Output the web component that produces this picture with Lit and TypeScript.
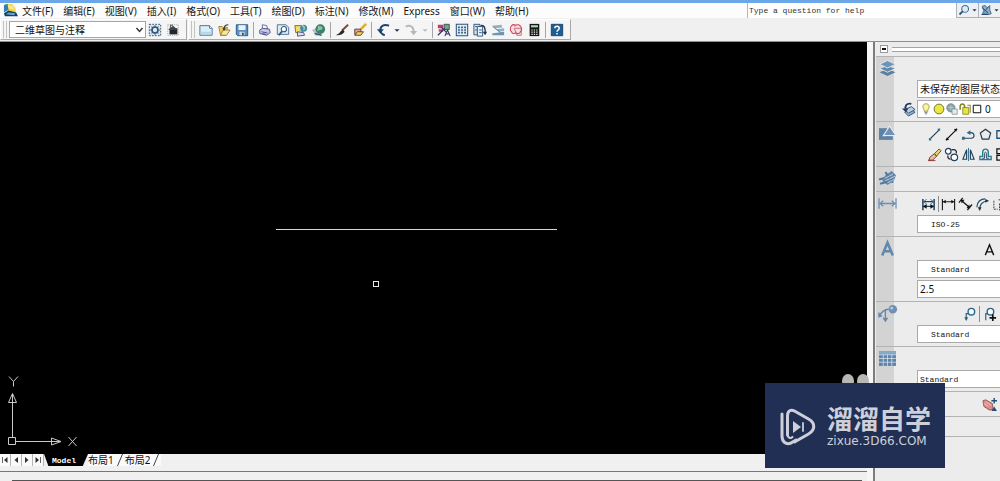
import { LitElement, html, svg, css, nothing, type TemplateResult } from "lit";
import { customElement, property } from "lit/decorators.js";

const glyphs: Record<string, unknown> = {
  logo: svg`<path d="M2 1h8l3 4 1 5H4z" fill="#f3d447"/><path d="M1 2l4-1 1 6-5 3z" fill="#2f7fb8"/><path d="M5 2l6 1 1 4-6-1z" fill="#f9e88c"/><path d="M1 11l5-3 8 2 2 4H2z" fill="#163f63"/><path d="M3 12l3-2 7 1-1 2z" fill="#5fa6d0"/>`,
  gear: svg`<path d="M1.500 1.500h13v13h-13z" fill="#dce8f1" stroke="#2c4155" stroke-dasharray="2 1.4"/><circle cx="8" cy="8" r="3.400" fill="none" stroke="#31567a" stroke-width="1.800"/><path d="M8 2.500v3M8 10.500v3M2.500 8h3M10.500 8h3M4 4l2 2M10 10l2 2M12 4l-2 2M6 10l-2 2" stroke="#31567a" stroke-width="1.200"/>`,
  workspace: svg`<path d="M2 2h12v12H2z" fill="none" stroke="#8a8a8a" stroke-dasharray="1 1.5"/><path d="M4 6h9v7H4z" fill="#20262d"/><path d="M2.500 8L8 3l5.500 5" fill="#3c4650"/><path d="M5 6V2.500h3" stroke="#333" fill="none"/>`,
  fresh: svg`<path d="M1 3h11l3 3v8H1z" fill="#d9eef8" stroke="#3f6c8d"/><path d="M12 3v3h3" fill="#fff" stroke="#3f6c8d"/><path d="M2 10h12v3H2z" fill="#b4d8ec"/>`,
  open: svg`<path d="M2 4h4l1 1h5l-2 9H4z" fill="#f0cf62" stroke="#85621c" stroke-width=".8"/><path d="M4 14l3-6h8l-4 6z" fill="#f8e79a" stroke="#85621c" stroke-width=".8"/><path d="M13 2c-3 0-5 1-5 5" stroke="#333" stroke-width="1.300" fill="none"/><path d="M6 6h4l-2 3z" fill="#333"/>`,
  save: svg`<path d="M1.500 2h13v12.500H3l-1.500-1.500z" fill="#5b8fbe" stroke="#25527c"/><path d="M4 2.500h8v5.500H4z" fill="#eaf3fa"/><path d="M5 10h6v4H5z" fill="#c9dcea"/><path d="M8 11h2v3H8z" fill="#25527c"/>`,
  print: svg`<path d="M5 2l5 1 1 4H5z" fill="#f6f8ff" stroke="#5a5f8d"/><path d="M2 8l3-2 8 1 1 4-4 3-8-2z" fill="#c5c8ea" stroke="#444a80"/><path d="M4 10l7 1.500M5 12l4 1" stroke="#444a80"/>`,
  preview: svg`<path d="M1.500 2h10l3 3v8h-13z" fill="#dcecf6" stroke="#41698c"/><circle cx="9" cy="7" r="3" fill="#fff" stroke="#2c587f" stroke-width="1.200"/><path d="M7 9.500L3 14" stroke="#2c587f" stroke-width="2"/>`,
  publish: svg`<path d="M1 3h8l2 3-2 5H2z" fill="#f2de64" stroke="#6b6427"/><circle cx="11" cy="6" r="4" fill="#3e88bd"/><path d="M9 3c2 0 4 2 2 5" stroke="#bfe08b" stroke-width="1.500" fill="none"/><path d="M4 10l7 1 1 3-8 1z" fill="#d7dcf0" stroke="#434b78"/>`,
  globe: svg`<path d="M0 8l8-4 3 8-6 3z" fill="#b5c4cf"/><circle cx="9.500" cy="7" r="5.500" fill="#3a8266"/><path d="M7 3c3 1 5 0 5 3s-5 1-6 4" fill="#8cc2a6"/><path d="M3 12l8 2" stroke="#355a78" stroke-width="2"/>`,
  brush: svg`<path d="M15 2L8 8.500" stroke="#7b4a36" stroke-width="2.200"/><path d="M9 7.500L6 10c-1 2-3 3-5 4 4 .5 8-1 10-4z" fill="#2b2626"/>`,
  block: svg`<path d="M15 1L9 7" stroke="#ddb02e" stroke-width="3"/><path d="M2 7h7v6H2z" fill="#e0a79c" stroke="#53372f"/><path d="M2 14l3-4h7l-3 4z" fill="#f4d45e" stroke="#53372f"/>`,
  undo: svg`<path d="M15 3C9 1 5 3 5 8c0 3 2 5 5 6" fill="none" stroke="#1d4370" stroke-width="2.200"/><path d="M1 7h8l-4 5z" fill="#1d4370"/>`,
  redo: svg`<path d="M2 4c5-2 9 0 9 6" fill="none" stroke="#b5b9bd" stroke-width="2.200"/><path d="M7 9h8l-4 5z" fill="#b5b9bd"/>`,
  props: svg`<path d="M1 2h6v4H1zM2 7h5v3H2z" fill="#b9406b"/><path d="M8 1.500h6v6H8z" fill="#68b06b" stroke="#3a3d66"/><path d="M1 14l8-8M5 5l6 6" stroke="#3c3167" stroke-width="1.400"/><path d="M9 15l3-7 3 7M10 12.500h4" fill="none" stroke="#3a3d66" stroke-width="1.300"/>`,
  center: svg`<path d="M1.500 1.500h13v13h-13z" fill="#e0edf6" stroke="#2f557c" stroke-width="1.200"/><path d="M3.500 5h2M7 5h2M10.500 5h2M3.500 8h2M7 8h2M10.500 8h2M3.500 11h2M7 11h2M10.500 11h2" stroke="#2f557c" stroke-width="1.800"/>`,
  palettes: svg`<path d="M1 1.500h7v12H1z" fill="#cfe0f0" stroke="#274b75"/><path d="M5 4h6v11H5z" fill="#e9f2fa" stroke="#274b75"/><path d="M2.500 4h2M2.500 8h2M7 8h3M7 11h3" stroke="#274b75"/><path d="M9 3c4-1 5 3 5 8" stroke="#1f3554" stroke-width="1.600" fill="none"/><path d="M11 10h5l-2 4z" fill="#1f3554"/>`,
  sheets: svg`<path d="M1 3l11-1 1 3-8 1zM6 7l9-1v3l-6 1z" fill="#8fb2ca"/><path d="M1 12l14-2v4H2z" fill="#6c95b3"/><path d="M2 4l9 7" stroke="#5b7080"/>`,
  markup: svg`<path d="M3 3c2-2 4-1 4 0 2-2 6-1 6 1 2 1 2 5 0 6 0 2-4 3-5 1-2 2-5 1-5-1-2-1-2-5 0-7z" fill="#f8dcdf" stroke="#c5495b" stroke-width="1.200"/><path d="M6 6h8v8H9z" fill="none" stroke="#bc6470"/>`,
  calc: svg`<path d="M3 1h11v14H3z" fill="#171717"/><path d="M4.500 2.500h8V5h-8z" fill="#a9d6a5"/><path d="M5 8h1.500M7.750 8h1.500M10.500 8H12M5 10.500h1.500M7.750 10.500h1.500M10.500 10.500H12M5 13h1.500M7.750 13h1.500M10.500 13H12" stroke="#eee" stroke-width="1.300"/>`,
  help: svg`<path d="M1.500 1.500h13v13h-13z" fill="#1f5e92" stroke="#113d64"/><path d="M5.500 6c0-3 5-3 5 0 0 2-2.500 1.500-2.500 4M8 11.500v1.500" fill="none" stroke="#fff" stroke-width="1.700"/>`,
  search: svg`<circle cx="9.500" cy="6.500" r="4.500" fill="#d9ecf7" stroke="#426b8d" stroke-width="1.400"/><path d="M6.500 9.500L2 14" stroke="#33506b" stroke-width="2.400"/>`,
  comms: svg`<path d="M3 3l4-1 3 3 3-3v6l2 5-4 1-3-2-5 2 2-5z" fill="#8fb0cd" stroke="#2c4e75"/><path d="M3 5l8 7M11 4l-5 6M2 14h9" stroke="#24466d" stroke-width="1.300"/>`,
  drop: svg`<path d="M5 7h6l-3 3z" fill="#27384e"/>`,
  dropOff: svg`<path d="M5 7h6l-3 3z" fill="#b9bcc0"/>`,
  layers: svg`<path d="M8 8.500l7.500 3L8 15 .5 11.500z" fill="#5c7e9f"/><path d="M8 5l7.500 3L8 11.500.5 8z" fill="#6288ac" stroke="#ececec" stroke-width=".8"/><path d="M8 .5L15.500 4 8 7.500.5 4z" fill="#6d94b9" stroke="#ececec" stroke-width=".8"/>`,
  shapes: svg`<path d="M0 3h8v11H0z" fill="#5d82a6"/><path d="M10 1l6 9H4z" fill="#6f93b6" stroke="#ececec"/><path d="M7 10.500h6V14H7z" fill="#5d82a6"/>`,
  hatchNav: svg`<path d="M6 5l6-4 4 4-2 5-6 4-5-4z" fill="#6287aa"/><path d="M0 9l7-2M1 13l7-2M6 2l7 10" stroke="#54789b" stroke-width="2"/><path d="M5 8l8-4M6 10l9-4M8 12l6-3" stroke="#dfe5eb" stroke-width=".7"/>`,
  dimNav: svg`<path d="M0 3v10M16 3v10M1 8h14M4 5.500L1 8l3 2.500M12 5.500L15 8l-3 2.500" fill="none" stroke="#6b90b4" stroke-width="1.200"/>`,
  textNav: svg`<path d="M3 14.500L8 2.500l5 12M4.500 10.500h7" fill="none" stroke="#6188ad" stroke-width="2.400"/>`,
  leaderNav: svg`<circle cx="13" cy="4" r="4" fill="#6e91b3"/><circle cx="12" cy="3" r="1.300" fill="#b5cadc"/><path d="M9 4C4 4 2 7 0 11M0 7v4l3-1M6 5v10M4 12l2 3 2-3" fill="none" stroke="#6287aa" stroke-width="1.300"/>`,
  tableNav: svg`<path d="M0 1h16v14H0z" fill="#5f85aa"/><path d="M0 1h16v3H0z" fill="#87a9c8"/><path d="M0 4.500h16M0 8h16M0 11.500h16M4 4v11M8 4v11M12 4v11" stroke="#dce6ef" stroke-width=".7"/>`,
  layerPrev: svg`<path d="M4 11l7-3 4 3-7 4z" fill="#93b0cb" stroke="#35557a"/><path d="M4 8l7-3 4 3-7 4z" fill="#bcd0e1" stroke="#35557a"/><path d="M11 2C6 1 4 4 5 8" fill="none" stroke="#213c62" stroke-width="2"/><path d="M1 7h7l-3 4z" fill="#213c62"/>`,
  bulb: svg`<path d="M8 1c-5 0-5 5-2.500 8v2h5V9C13 6 13 1 8 1z" fill="#fbf3a0" stroke="#8b8440"/><path d="M6 12.500h4M6.500 14.500h3" stroke="#555"/>`,
  sun: svg`<circle cx="8" cy="8" r="6.500" fill="#ece843" stroke="#757426" stroke-width="1.300"/>`,
  freeze: svg`<circle cx="6.500" cy="6.500" r="5.500" fill="#8ca7a8" stroke="#627c80"/><path d="M8 8h7v7H8z" fill="#e3eaea" stroke="#7f9294"/><path d="M3 6h7M6.500 3v7" stroke="#c1d1d2"/>`,
  lock: svg`<path d="M1.500 9V5c0-5 6-5 6 0v2" fill="none" stroke="#7e8223" stroke-width="2"/><path d="M5 6h8v9H5z" fill="#eae442" stroke="#77781e"/><path d="M11 3h4v10" fill="none" stroke="#888a32" stroke-width="1.400"/>`,
  swatch: svg`<path d="M2 2h12v12H2z" fill="#fff" stroke="#111" stroke-width="1.600"/>`,
  line: svg`<path d="M3 13L13 3" stroke="#243c55" stroke-width="1.300"/><path d="M2 12h2.500v2.500H2zM11.500 1.500H14V4h-2.500z" fill="#2e7390"/>`,
  xline: svg`<path d="M2 14L14 2" stroke="#111" stroke-width="1.400"/><path d="M2 14.500l1-3.500 2.500 2.500zM14 1.500l-1 3.500-2.500-2.500z" fill="#111"/>`,
  pline: svg`<path d="M2 12h9c4 0 4-6-1-6H8" fill="none" stroke="#1f4662" stroke-width="1.300"/><path d="M1 10.500h3v3H1zM10 3.500v5L6 6z" fill="#2e6a89"/>`,
  polygon: svg`<path d="M8 2.500l5.500 4-2 6.500h-7l-2-6.500z" fill="none" stroke="#243c4d" stroke-width="1.300"/>`,
  rect: svg`<path d="M2 4h12v8H2z" fill="none" stroke="#245070" stroke-width="1.400"/>`,
  erase: svg`<path d="M8 7l5-5 2 2-5 6z" fill="#e9d26c" stroke="#5d5225"/><path d="M3 11l5-4 2 3-4 4H2z" fill="#e8c6a2" stroke="#6b3431"/><path d="M1 14.500h8" stroke="#8a3b30"/>`,
  copy: svg`<circle cx="4.500" cy="4.500" r="3" fill="#fff" stroke="#20425f" stroke-width="1.300"/><circle cx="11" cy="11" r="3.500" fill="#fff" stroke="#20425f" stroke-width="1.300"/><path d="M8 3c4-1 6 1 5 4M4 9c0 2 1 4 3 4" fill="none" stroke="#222" stroke-width="1.300"/>`,
  mirror: svg`<path d="M6 3v10H2zM10 3v10h4z" fill="none" stroke="#223f58" stroke-width="1.200"/><path d="M8 1v14" stroke="#2c6e8d"/>`,
  offset: svg`<path d="M2 13.500V10h3V6c0-5 6-5 6 0v4h3v3.500z" fill="none" stroke="#287a8e" stroke-width="1.500"/><path d="M4 12h3V7c0-2 2-2 2 0v5h3" fill="none" stroke="#264a68"/>`,
  array: svg`<path d="M2 2h5v5H2zM9 2h5v5H9zM2 9h5v5H2zM9 9h5v5H9z" fill="none" stroke="#111" stroke-width="1.300"/>`,
  dimFast: svg`<path d="M2 2v12M14 2v12" stroke="#26445f" stroke-width="1.600"/><path d="M2 5h12M2 10h12" stroke="#26445f" stroke-width="1.300"/><path d="M6 2.500L2.500 5 6 7.500M10 2.500L13.500 5 10 7.500" fill="none" stroke="#3e7192"/><path d="M6 7.500L2 10l4 2.500zM10 7.500l4 2.500-4 2.500z" fill="#111"/>`,
  dimLinear: svg`<path d="M1.500 2v12M14.500 2v12M2 5h12" stroke="#1b1b1b" stroke-width="1.200"/><path d="M5 3L2 5l3 2zM11 3l3 2-3 2z" fill="#111"/>`,
  dimAligned: svg`<path d="M4 4l8 7M1 6l4-5M10 14l5-6" stroke="#111" stroke-width="1.300"/><path d="M3 3h4L4 7zM13 12H9l3-4z" fill="#111"/>`,
  dimArc: svg`<path d="M5 13C5 8 8 5 13 4M2 11c0-6 4-9 9-9" fill="none" stroke="#244b67" stroke-width="1.300"/><path d="M3 11h4l-2 4zM15 4l-4-2v4z" fill="#23313f"/>`,
  dimOrd: svg`<path d="M2 4v9h4M7 3h5M8 7v7h5" fill="none" stroke="#333" stroke-dasharray="2 1"/>`,
  mtext: svg`<path d="M3.500 14L8 3l4.500 11M5 10.500h6" fill="none" stroke="#111" stroke-width="1.500"/>`,
  leader: svg`<circle cx="10" cy="5" r="3.500" fill="#f5fafc" stroke="#2f658a" stroke-width="1.500"/><path d="M7 7H4.500v6" fill="none" stroke="#2f658a" stroke-width="1.300"/><path d="M2.500 11h4l-2 4z" fill="#315b78"/>`,
  leaderAdd: svg`<circle cx="9" cy="5" r="3.500" fill="#f5fafc" stroke="#2f658a" stroke-width="1.500"/><path d="M6 7H4v7" fill="none" stroke="#2f658a" stroke-width="1.300"/><path d="M11.500 8v7M8 11.500h7" stroke="#111" stroke-width="1.800"/>`,
  hand: svg`<path d="M1 4l3-1 7 4 1 6-4 1-6-4z" fill="#dc8b86" stroke="#985955"/><path d="M2 7l5 3M4 5l6 4" stroke="#f3c2bd"/><path d="M13 1v6M10 4h6" stroke="#26507b" stroke-width="1.500"/><path d="M10 15l3-5 3 5z" fill="#26507b"/>`,
  first: svg`<path d="M3 2v12" stroke="#333" stroke-width="1.500"/><path d="M13 2v12L6 8z" fill="#333"/>`,
  prev: svg`<path d="M12 2v12L5 8z" fill="#333"/>`,
  next: svg`<path d="M4 2v12l7-6z" fill="#333"/>`,
  last: svg`<path d="M13 2v12" stroke="#333" stroke-width="1.500"/><path d="M3 2v12l7-6z" fill="#333"/>`,
};

const icon = (name: string) =>
  html`<svg class="icon" viewBox="0 0 16 16" aria-hidden="true">${glyphs[name]}</svg>`;

const iconStyles = css`
  * { box-sizing: border-box; }
  .icon { width: 14px; height: 14px; display: block; flex: none; overflow: visible; }
  button { border: 0; padding: 0; margin: 0; background: none; font: inherit; color: inherit;
    display: flex; align-items: center; justify-content: center; flex: none; }
  select, input { font: inherit; color: inherit; margin: 0; border: 0; border-radius: 0; outline: 0;
    background: #fff; appearance: none; min-width: 0; }
`;

@customElement("menu-bar")
class MenuBar extends LitElement {
  static styles = [iconStyles, css`
    :host { display: flex; height: 15px; background: #fcfcfc; align-items: center; padding-left: 3px; }
    .logo .icon { width: 15px; height: 15px; }
    nav { display: flex; gap: 10px; padding-left: 4px; flex: 1; }
    nav button { color: #161616; }
    .ask { display: flex; width: 253px; height: 15px; border-left: 1px solid #b5b5b5; }
    .ask input { flex: 1; font: 8px "Liberation Mono", monospace; color: #333; padding: 0 0 0 1px; }
    .ask button { border: 1px solid #aab3bd; border-width: 0 0 1px 0; background: #eef1f4; }
    .ask .wide { width: 14px; border-left-width: 1px; }
    .ask .thin { width: 8px; }
    .wide .icon { width: 12px; height: 12px; }
    .thin .icon { width: 11px; }
  `];
  render() {
    const items = ["文件(F)", "编辑(E)", "视图(V)", "插入(I)", "格式(O)", "工具(T)", "绘图(D)", "标注(N)", "修改(M)", "Express", "窗口(W)", "帮助(H)"];
    return html`
      <span class="logo">${icon("logo")}</span>
      <nav>${items.map((t) => html`<button>${t}</button>`)}</nav>
      <div class="ask">
        <input aria-label="Help question" value="Type a question for help">
        <button class="wide" aria-label="Search">${icon("search")}</button>
        <button class="thin" aria-label="Search options">${icon("drop")}</button>
        <button class="wide" aria-label="Communication center">${icon("comms")}</button>
        <button class="thin" aria-label="More">${icon("drop")}</button>
      </div>`;
  }
}

@customElement("tool-bar")
class ToolBar extends LitElement {
  static styles = [iconStyles, css`
    :host { box-sizing: border-box; display: flex; gap: 1px; height: 24px; padding-top: 1px; background: #f0f0f0; border-bottom: 1px solid #8f8f8f; }
    .group { display: flex; align-items: center; height: 21px; padding-right: 4px; border: 1px solid #fff; border-right-color: #a9a9a9; border-bottom-color: #a9a9a9; background: #f5f5f5; }
    .grip { width: 4px; height: 17px; margin: 0 2px; border: 1px solid #c2c2c2; border-width: 0 1px; flex: none; }
    .combo { position: relative; display: flex; width: 137px; height: 17px; border: 1px solid #a5a5a5; background: #fff; }
    .combo select { flex: 1; padding: 0 16px 0 5px; background: none; }
    .combo svg { position: absolute; right: 1px; top: 4px; width: 9px; height: 8px; pointer-events: none; }
    button { width: 18px; height: 18px; }
    button.arrow { width: 10px; }
    .sep { width: 1px; height: 16px; margin: 0 2px; background: #a5a5a5; flex: none; }
  `];
  render() {
    const tools = ["fresh", "open", "save", "|", "print", "preview", "publish", "globe", "|", "brush", "block", "|", "undo", "drop", "redo", "dropOff", "|", "props", "center", "palettes", "sheets", "markup", "calc", "|", "help"];
    return html`
      <div class="group">
        <span class="grip"></span>
        <div class="combo">
          <select aria-label="Workspace"><option>二维草图与注释</option></select>
          <svg viewBox="0 0 9 8"><path d="M1.500 2l3 3.500 3-3.500" fill="none" stroke="#333" stroke-width="1.400"/></svg>
        </div>
        <button aria-label="Workspace settings">${icon("gear")}</button>
        <button aria-label="My workspace">${icon("workspace")}</button>
      </div>
      <div class="group">
        <span class="grip"></span>
        ${tools.map((t) => t === "|" ? html`<span class="sep"></span>`
          : html`<button class=${t.startsWith("drop") ? "arrow" : ""} aria-label=${t}>${icon(t)}</button>`)}
      </div>`;
  }
}

@customElement("drawing-area")
class DrawingArea extends LitElement {
  static styles = css`
    :host { display: block; position: relative; background: #000; overflow: hidden; }
    svg { position: absolute; left: 0; }
    .model { top: 0; width: 600px; height: 300px; }
    .ucs { bottom: 0; width: 90px; height: 84px; }
  `;
  render() {
    return html`
      <svg class="model" viewBox="0 0 600 300" fill="none">
        <path d="M276 187.500h281" stroke="#d8d8d8"/>
        <rect x="373.500" y="239.500" width="5" height="5" stroke="#e6e6e6"/>
      </svg>
      <svg class="ucs" viewBox="0 0 90 84" fill="none" stroke="#c9c9c9">
        <path d="M8.500 67.500h7v7h-7zM12.500 67V24M16 71.500h45M8.500 32.500l4-9 4 9zM51.500 68l9.500 3.500-9.500 3.500z"/>
        <path d="M9 6.500l4.500 5 4.500-5M13.500 11.500v5M68.500 67l8 9M76.500 67l-8 9"/>
      </svg>`;
  }
}

@customElement("layout-tabs")
class LayoutTabs extends LitElement {
  static styles = [iconStyles, css`
    :host { display: flex; height: 13px; background: #f0f0f0; }
    .step { width: 11px; height: 12px; border-right: 1px solid #b5b5b5; background: #fafafa; }
    .step .icon { width: 8px; height: 8px; }
    .model { width: 44px; height: 12px; background: #000; color: #fff; font: bold 8px "Liberation Mono", monospace;
      clip-path: polygon(0 0, 100% 0, 88% 100%, 10% 100%); padding-right: 4px; }
    .sheet { height: 12px; background: #fafafa; color: #111; }
    .slash { width: 11px; height: 12px; background: #fafafa; }
  `];
  render() {
    const slash = html`<svg class="slash" viewBox="0 0 11 12"><path d="M8.500 0L3.500 12" stroke="#444"/></svg>`;
    return html`
      ${["first", "prev", "next", "last"].map((n) => html`<button class="step" aria-label=${n}>${icon(n)}</button>`)}
      <button class="model">Model</button>
      <button class="sheet">布局1</button>${slash}
      <button class="sheet">布局2</button>${slash}`;
  }
}

@customElement("panel-section")
class PanelSection extends LitElement {
  @property() glyph = "";
  static styles = [iconStyles, css`
    :host { display: grid; grid-template-columns: 18px minmax(0, 1fr); border-bottom: 1px solid #b3b3b3; background: #ececec; }
    .rail { background: #d3d3d3; padding: 2px 0 2px 3px; min-height: 19px; }
    .rail .icon { width: 17px; height: 17px; margin-top: 1px; }
    .rows { padding: 2px 0; }
  `];
  render() {
    return html`<div class="rail">${this.glyph ? icon(this.glyph) : nothing}</div><div class="rows"><slot></slot></div>`;
  }
}

@customElement("dashboard-panel")
class DashboardPanel extends LitElement {
  static styles = [iconStyles, css`
    :host { display: flex; flex-direction: column; background: #ececec; border-left: 2px solid #7c7c7c; overflow: hidden; padding-left: 1px; }
    .title { display: flex; align-items: center; height: 15px; border-bottom: 1px solid #b3b3b3; padding-left: 4px; gap: 4px; flex: none; }
    .fold { width: 8px; height: 8px; border: 1px solid #999; background: #fff; }
    .fold::after { content: ""; width: 4px; height: 2px; background: #111; }
    .bars { flex: 1; height: 5px; border: 1px solid #a3a3a3; border-width: 1px 0; background: #fff; }
    .row { display: flex; align-items: center; height: 20px; padding-left: 23px; }
    .row button { width: 17px; height: 18px; }
    .row button .icon { width: 15px; height: 15px; }
    .draw { padding-left: 32px; }
    .dims { padding-left: 26px; }
    .text { padding-left: 87px; }
    .lead { padding-left: 67px; }
    .layer { padding-left: 6px; }
    .field { display: flex; align-items: center; flex: 1; height: 18px; border: 1px solid #aaa; border-right: 0; background: #fff; min-width: 0; }
    .field select, .field input { flex: 1; height: 16px; padding: 0 0 0 2px; }
    .field.mono { font: 8px "Liberation Mono", monospace; color: #111; }
    .field.inset select { padding-left: 13px; }
    .field.states { padding-left: 2px; gap: 1px; }
    .states .icon { width: 12px; height: 12px; }
    .states .small { display: flex; }
    .states .small .icon { width: 10px; height: 10px; }
    .sep { width: 1px; height: 16px; background: #8d8d8d; margin: 0 1px; flex: none; }
  `];
  private tools(kind: string, names: string[]): TemplateResult {
    return html`<div class="row ${kind}">${names.map((n) => n === "|" ? html`<span class="sep"></span>`
      : html`<button aria-label=${n}>${icon(n)}</button>`)}</div>`;
  }
  private pick(label: string, value: string, kind: string): TemplateResult {
    return html`<div class="row"><div class="field ${kind}"><select aria-label=${label}><option>${value}</option></select></div></div>`;
  }
  render() {
    return html`
      <div class="title"><button class="fold" aria-label="Collapse"></button><span class="bars"></span></div>
      <panel-section glyph="layers">
        <div class="row"></div>
        ${this.pick("Layer state", "未保存的图层状态", "")}
        <div class="row layer">
          <button aria-label="Previous layer state">${icon("layerPrev")}</button>
          <div class="field states">
            ${["bulb", "sun", "freeze", "lock"].map(icon)}<span class="small">${icon("swatch")}</span>
            <select aria-label="Layer"><option>0</option></select>
          </div>
        </div>
      </panel-section>
      <panel-section glyph="shapes">
        ${this.tools("draw", ["line", "xline", "pline", "polygon", "rect"])}
        ${this.tools("draw", ["erase", "copy", "mirror", "offset", "array"])}
      </panel-section>
      <panel-section glyph="hatchNav"><div class="row"></div></panel-section>
      <panel-section glyph="dimNav">
        ${this.tools("dims", ["dimFast", "|", "dimLinear", "dimAligned", "dimArc", "dimOrd"])}
        ${this.pick("Dimension style", "ISO-25", "mono inset")}
      </panel-section>
      <panel-section glyph="textNav">
        ${this.tools("text", ["mtext"])}
        ${this.pick("Text style", "Standard", "mono inset")}
        <div class="row"><div class="field"><input aria-label="Text height" value="2.5"></div></div>
      </panel-section>
      <panel-section glyph="leaderNav">
        ${this.tools("lead", ["leader", "|", "leaderAdd"])}
        ${this.pick("Leader style", "Standard", "mono inset")}
      </panel-section>
      <panel-section glyph="tableNav">
        <div class="row"></div>
        ${this.pick("Table style", "Standard", "mono")}
      </panel-section>
      <panel-section>${this.tools("text", ["hand"])}</panel-section>
      <panel-section></panel-section>`;
  }
}

@customElement("brand-badge")
class BrandBadge extends LitElement {
  static styles = css`
    :host { box-sizing: border-box; display: flex; align-items: center; width: 180px; height: 85px; padding: 2px 0 0 15px; gap: 11px; background: #222f55; color: #cdd0d8; }
    .ears { position: absolute; left: 76px; bottom: 100%; width: 28px; height: 10px; }
    .mark { width: 36px; height: 38px; flex: none; }
    .name { font: bold 26px/28px "Liberation Sans", "Noto Sans CJK SC", sans-serif; white-space: nowrap; }
    .site { font: 12px/14px "DejaVu Sans", sans-serif; white-space: nowrap; }
  `;
  render() {
    return html`
      <svg class="ears" viewBox="0 0 28 10"><ellipse cx="7" cy="8" rx="6" ry="7" fill="#b7b7b3"/><ellipse cx="22" cy="8" rx="6" ry="7" fill="#b7b7b3"/></svg>
      <svg class="mark" viewBox="0 0 36 38" fill="none" stroke="#cdd0d8" stroke-linejoin="round" stroke-linecap="round">
        <path d="M2 6v22c0 6 4 9 9 7l5-3" stroke-width="3"/>
        <path d="M7.500 27V8c0-5 3-7 7-5l14 8c7 4 7 11 0 15l-14 8" stroke-width="3"/>
        <path d="M7.500 26c0 4 3 5 5 3" stroke-width="2"/>
        <path d="M13 13v12l8-6z" fill="#cdd0d8" stroke="none"/><path d="M23 15v8" stroke-width="1.800"/>
      </svg>
      <div><div class="name">溜溜自学</div><div class="site">zixue.3D66.COM</div></div>`;
  }
}

@customElement("app-root")
class AppRoot extends LitElement {
  static styles = css`
    :host { display: flex; flex-direction: column; position: relative; height: 100vh; overflow: hidden; background: #f0f0f0;
      font: 10px/12px "Noto Sans", "Noto Sans CJK SC", sans-serif; color: #111; }
    .frame { height: 3px; background: #6ba6e8; flex: none; }
    menu-bar, tool-bar { flex: none; }
    .work { flex: 1; display: grid; grid-template-columns: minmax(0, 1fr) 127px; min-height: 0; }
    .left { display: flex; flex-direction: column; min-width: 0; padding-right: 6px; background: linear-gradient(to left, #f6f6f6 6px, #f0f0f0 6px); }
    drawing-area { flex: 1; }
    .command { box-sizing: border-box; height: 14px; padding-top: 4px; }
    .command::before { content: ""; display: block; height: 8px; border-top: 1px solid #777; }
    .command::after { content: ""; display: block; height: 1px; margin: 0 5px 0 12px; background: #555; }
    brand-badge { position: absolute; right: 55px; bottom: 13px; }
  `;
  render() {
    return html`
      <div class="frame"></div>
      <menu-bar></menu-bar>
      <tool-bar></tool-bar>
      <div class="work">
        <div class="left">
          <drawing-area></drawing-area>
          <layout-tabs></layout-tabs>
          <div class="command"></div>
        </div>
        <dashboard-panel></dashboard-panel>
      </div>
      <brand-badge></brand-badge>`;
  }
}
